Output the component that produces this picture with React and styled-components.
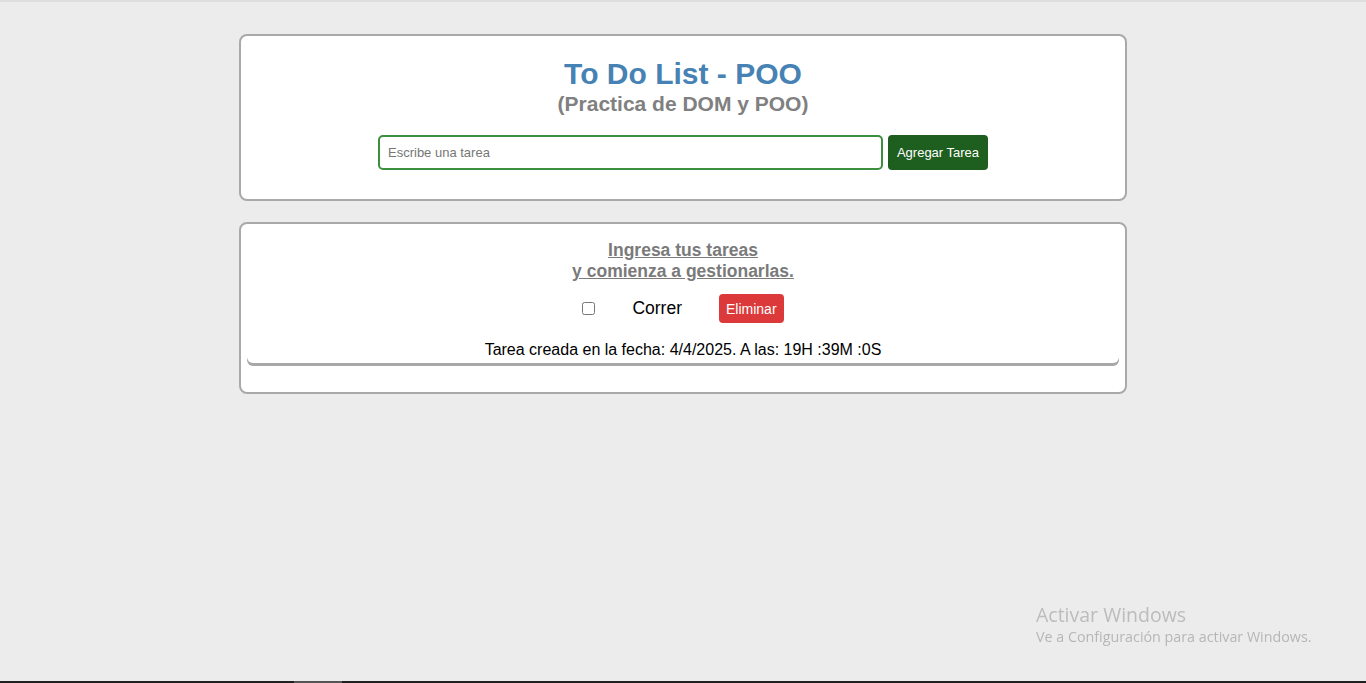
import React from 'react';
import styled, { createGlobalStyle } from 'styled-components';

const GlobalStyle = createGlobalStyle`
  html, body {
    margin: 0;
    padding: 0;
    background-color: #ececec;
    font-family: "Liberation Sans", Arial, sans-serif;
  }
`;

const Page = styled.div`
  min-height: 683px;
  box-sizing: border-box;
  border-top: 2px solid #dedede;
  padding-top: 32px;
  display: flex;
  flex-direction: column;
  align-items: center;
  gap: 21px;
`;

const Card = styled.section`
  width: 888px;
  box-sizing: border-box;
  background-color: #ffffff;
  border: 2px solid #a9a9a9;
  border-radius: 8px;
  padding: ${props => props.$padding};
  display: flex;
  flex-direction: column;
  align-items: center;
`;

const Title = styled.h1`
  margin: 0;
  font-size: 30px;
  line-height: 32px;
  font-weight: bold;
  color: #4682b4;
`;

const Subtitle = styled.h2`
  margin: 3px 0 0;
  font-size: 21px;
  line-height: 22px;
  font-weight: bold;
  color: #808080;
`;

const Form = styled.form`
  margin-top: 20px;
  display: flex;
  gap: 5px;
`;

const TaskInput = styled.input`
  width: 505px;
  height: 35px;
  box-sizing: border-box;
  border: 2px solid #3c8f3c;
  border-radius: 5px;
  padding: 0 8px;
  font-family: "Liberation Sans", Arial, sans-serif;
  font-size: 13px;
  color: #222;
  outline: none;

  &::placeholder {
    color: #767676;
  }
`;

const AddButton = styled.button`
  height: 35px;
  width: 100px;
  border: none;
  border-radius: 4px;
  background-color: #1e5e1e;
  color: #ffffff;
  font-family: "Liberation Sans", Arial, sans-serif;
  font-size: 13px;
  padding: 0;
`;

const Heading = styled.h3`
  margin: 0;
  font-size: 17.5px;
  line-height: 21px;
  font-weight: bold;
  color: #7a7a7a;
  text-decoration: underline;
  text-align: center;
`;

const TaskItem = styled.div`
  align-self: stretch;
  margin: 12px 6px 29px;
  padding-bottom: 4px;
  border-radius: 6px;
  box-shadow: 0 3px 0 #a8a8a8;
  display: flex;
  flex-direction: column;
  align-items: center;
`;

const TaskRow = styled.div`
  display: flex;
  align-items: center;
  gap: 37px;
`;

const Check = styled.input`
  width: 13px;
  height: 13px;
  margin: 0;
`;

const TaskName = styled.span`
  font-size: 17.5px;
  color: #000;
  text-decoration: ${props => (props.$done ? 'line-through' : 'none')};
`;

const DeleteButton = styled.button`
  height: 29px;
  padding: 0 7px;
  border: none;
  border-radius: 4px;
  background-color: #dc3a3a;
  color: #ffffff;
  font-family: "Liberation Sans", Arial, sans-serif;
  font-size: 14px;
`;

const TaskDate = styled.p`
  margin: 18px 0 0;
  font-size: 16px;
  line-height: 18px;
  color: #000;
`;

const Watermark = styled.div`
  position: fixed;
  left: 1036px;
  top: 602px;
  font-family: "Open Sans", "Noto Sans", sans-serif;
  font-weight: 400;
  color: #bcbcbc;
  pointer-events: none;
`;

const WatermarkTitle = styled.div`
  font-size: 19.5px;
  line-height: 25px;
`;

const WatermarkText = styled.div`
  font-size: 14.3px;
  line-height: 20px;
  color: #b6b6b6;
`;

const Taskbar = styled.div`
  position: fixed;
  left: 0;
  right: 0;
  bottom: 0;
  height: 2px;
  background-color: #202020;
`;

const TaskbarSlot = styled.div`
  margin-left: 294px;
  width: 48px;
  height: 2px;
  background-color: #555;
`;

const tasks = [
  { id: 1, name: 'Correr', done: false, created: '4/4/2025', time: '19H :39M :0S' },
];

export default function App() {
  return (
    <>
      <GlobalStyle />
      <Page>
        <Card $padding="22px 0 29px">
          <Title>To Do List - POO</Title>
          <Subtitle>(Practica de DOM y POO)</Subtitle>
          <Form onSubmit={e => e.preventDefault()}>
            <TaskInput type="text" placeholder="Escribe una tarea" />
            <AddButton type="submit">Agregar Tarea</AddButton>
          </Form>
        </Card>

        <Card $padding="16px 0 0">
          <Heading>
            Ingresa tus tareas
            <br />
            y comienza a gestionarlas.
          </Heading>
          {tasks.map(task => (
            <TaskItem key={task.id}>
              <TaskRow>
                <Check type="checkbox" defaultChecked={task.done} />
                <TaskName $done={task.done}>{task.name}</TaskName>
                <DeleteButton type="button">Eliminar</DeleteButton>
              </TaskRow>
              <TaskDate>
                Tarea creada en la fecha: {task.created}. A las: {task.time}
              </TaskDate>
            </TaskItem>
          ))}
        </Card>
      </Page>

      <Watermark>
        <WatermarkTitle>Activar Windows</WatermarkTitle>
        <WatermarkText>Ve a Configuración para activar Windows.</WatermarkText>
      </Watermark>
      <Taskbar>
        <TaskbarSlot />
      </Taskbar>
    </>
  );
}
